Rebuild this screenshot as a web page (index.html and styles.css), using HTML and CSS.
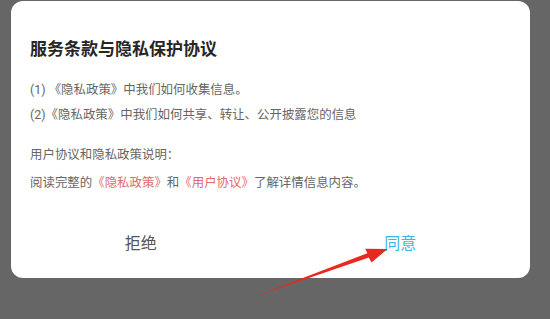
FILE: index.html
```html
<!DOCTYPE html>
<html lang="zh-CN">
<head>
<meta charset="utf-8">
<title>服务条款与隐私保护协议</title>
<link rel="stylesheet" href="styles.css">
</head>
<body>
<div class="screen">
  <div class="dialog">
    <h1 class="dialog-title">服务条款与隐私保护协议</h1>
    <p class="item item-first">(1) 《隐私政策》中我们如何收集信息。</p>
    <p class="item">(2)《隐私政策》中我们如何共享、转让、公开披露您的信息</p>
    <p class="item item-gap">用户协议和隐私政策说明：</p>
    <p class="item item-tight">阅读完整的<span class="link">《隐私政策》</span>和<span class="link">《用户协议》</span>了解详情信息内容。</p>
    <div class="actions">
      <button class="btn btn-reject">拒绝</button>
      <button class="btn btn-agree">同意</button>
    </div>
  </div>
  <svg class="annotation" width="550" height="319" viewBox="0 0 550 319" aria-hidden="true">
    <polygon fill="#e8291f" points="252,297.5 368.8,257.4 371.5,262.5 387.5,249 365.2,248.8 367.4,253.2"/>
  </svg>
</div>
</body>
</html>
```
FILE: styles.css
```css
* { box-sizing: border-box; }
html, body {
  margin: 0;
  padding: 0;
  background: #666666;
}
body {
  width: 550px;
  height: 319px;
  overflow: hidden;
  font-family: Roboto, "Noto Sans CJK SC", sans-serif;
}
.screen {
  position: relative;
  width: 550px;
  height: 319px;
  padding: 1px 0 0 11px;
}
.dialog {
  width: 519px;
  background: #ffffff;
  border-radius: 12px;
  padding: 36px 19px 14px 19px;
  display: flex;
  flex-direction: column;
}
.dialog-title {
  margin: 0;
  font-size: 17px;
  line-height: 24px;
  font-weight: 700;
  color: #262626;
}
.item {
  margin: 0;
  font-size: 12.45px;
  line-height: 25px;
  color: #666666;
  white-space: nowrap;
}
.item-first { margin-top: 16px; }
.item-gap { margin-top: 15px; }
.item-tight { margin-top: 3px; }
.link { color: #e26a6a; }
.actions {
  display: flex;
  margin: 28px -19px 0 -19px;
  height: 41px;
}
.btn {
  flex: 1;
  border: 0;
  background: transparent;
  font-family: inherit;
  font-size: 16px;
  line-height: 41px;
  padding: 0;
  text-align: center;
}
.btn-reject { color: #555555; }
.btn-agree { color: #3db5e6; }
.annotation {
  position: absolute;
  left: 0;
  top: 0;
  pointer-events: none;
}
```
